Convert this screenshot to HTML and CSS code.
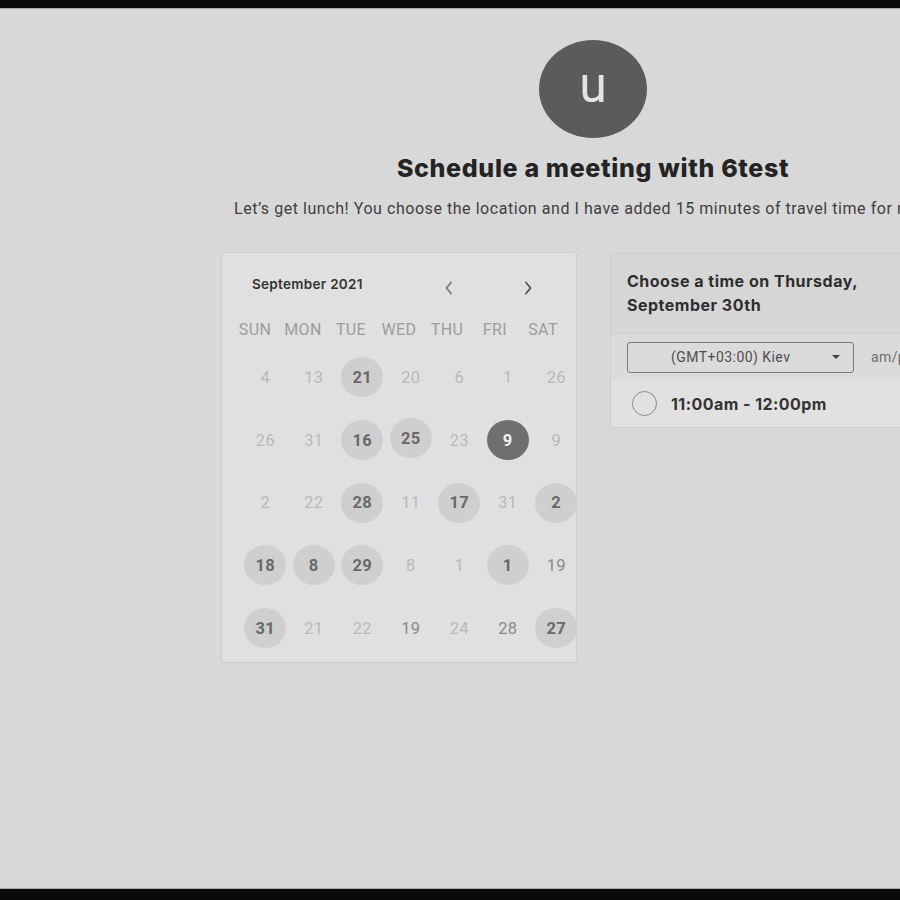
FILE: index.html
```html
<!DOCTYPE html>
<html lang="en">
<head>
<meta charset="utf-8">
<title>Schedule a meeting with 6test</title>
<link rel="stylesheet" href="styles.css">
</head>
<body>
<div class="frame">
  <div class="wrap">
    <header class="intro">
      <div class="avatar">u</div>
      <h1 class="title">Schedule a meeting with 6test</h1>
      <p class="subtitle">Let’s get lunch! You choose the location and I have added 15 minutes of travel time for me.</p>
    </header>
    <main class="cols">
      <section class="calendar">
        <div class="cal-head">
          <span class="month">September 2021</span>
          <button class="nav" aria-label="Previous month">
            <svg width="24" height="24" viewBox="0 0 24 24"><path d="M14 6.5 L9.5 12 L14 17.5" fill="none" stroke="#7a7a7a" stroke-width="1.8" stroke-linecap="round" stroke-linejoin="round"/></svg>
          </button>
          <button class="nav" aria-label="Next month">
            <svg width="24" height="24" viewBox="0 0 24 24"><path d="M10 6.5 L14.5 12 L10 17.5" fill="none" stroke="#555" stroke-width="1.8" stroke-linecap="round" stroke-linejoin="round"/></svg>
          </button>
        </div>
        <div class="weekdays">
          <span>SUN</span><span>MON</span><span>TUE</span><span>WED</span><span>THU</span><span>FRI</span><span>SAT</span>
        </div>
        <div class="days">
          <span class="d off">4</span><span class="d off">13</span><span class="d av">21</span><span class="d off">20</span><span class="d off">6</span><span class="d off">1</span><span class="d off">26</span>
          <span class="d off">26</span><span class="d off">31</span><span class="d av">16</span><span class="d av up">25</span><span class="d off">23</span><span class="d sel">9</span><span class="d off">9</span>
          <span class="d off">2</span><span class="d off">22</span><span class="d av">28</span><span class="d off">11</span><span class="d av">17</span><span class="d off">31</span><span class="d av">2</span>
          <span class="d av">18</span><span class="d av">8</span><span class="d av">29</span><span class="d off">8</span><span class="d off">1</span><span class="d av">1</span><span class="d mid">19</span>
          <span class="d av">31</span><span class="d off">21</span><span class="d off">22</span><span class="d mid">19</span><span class="d off">24</span><span class="d mid">28</span><span class="d av">27</span>
        </div>
      </section>
      <section class="times">
        <div class="times-head">Choose a time on Thursday,<br>September 30th</div>
        <div class="tz-row">
          <div class="tz-select">
            <span class="tz-text">(GMT+03:00) Kiev</span>
            <span class="caret"></span>
          </div>
          <span class="ampm">am/pm</span>
        </div>
        <div class="slot">
          <span class="radio"></span>
          <span class="slot-text">11:00am - 12:00pm</span>
        </div>
      </section>
    </main>
  </div>
</div>
</body>
</html>
```
FILE: styles.css
```css
html, body {
  margin: 0;
  padding: 0;
  background: #0a0a0a;
  overflow: hidden;
}

.frame {
  box-sizing: border-box;
  width: 900px;
  height: 900px;
  border-top: 8px solid #0a0a0a;
  border-bottom: 11px solid #0a0a0a;
  background: #d8d8d8;
  box-shadow: inset 0 1px 0 #a8a8a8, inset 0 -1px 0 #a8a8a8;
  overflow: hidden;
  font-family: Roboto, "Liberation Sans", sans-serif;
}

.wrap {
  width: 744px;
  margin-left: 221px;
  padding-top: 32px;
}

.intro {
  display: flex;
  flex-direction: column;
  align-items: center;
}

.avatar {
  width: 108px;
  height: 98px;
  border-radius: 50%;
  background: #5b5b5b;
  color: #e4e4e4;
  font-family: Roboto, sans-serif;
  font-weight: 400;
  font-size: 50px;
  line-height: 90px;
  text-align: center;
}

.title {
  margin: 14px 0 0;
  font-family: Inter, "Liberation Sans", sans-serif;
  font-weight: 800;
  font-size: 25px;
  line-height: 32px;
  letter-spacing: 0.65px;
  color: #242424;
}

.subtitle {
  align-self: flex-start;
  margin: 15px 0 0 13px;
  white-space: nowrap;
  font-size: 16px;
  line-height: 20px;
  letter-spacing: 0.55px;
  color: #3e3e3e;
}

.cols {
  display: flex;
  align-items: flex-start;
  gap: 33px;
  margin-top: 33px;
}

/* calendar */
.calendar {
  box-sizing: border-box;
  width: 356px;
  height: 411px;
  flex: none;
  background: #e0e0e0;
  border: 1px solid #cdcdcd;
  border-radius: 3px;
  overflow: hidden;
  padding-top: 21px;
}

.cal-head {
  display: flex;
  align-items: center;
  height: 22px;
  padding: 0 36px 0 30px;
}

.month {
  flex: 1;
  font-family: Inter, "Liberation Sans", sans-serif;
  font-weight: 600;
  font-size: 13.5px;
  letter-spacing: 0.3px;
  color: #333;
  margin-top: -3px;
}

.nav {
  width: 24px;
  height: 24px;
  padding: 0;
  border: 0;
  background: none;
  display: flex;
  margin-top: 6px;
}

.nav + .nav {
  margin-left: 55px;
}

.weekdays {
  display: grid;
  grid-template-columns: repeat(7, 48px);
  margin-top: 23px;
  padding-left: 9px;
  height: 20px;
  align-items: center;
}

.weekdays span {
  text-align: center;
  font-size: 16px;
  color: #9c9c9c;
  letter-spacing: 0.4px;
}

.days {
  display: grid;
  grid-template-columns: repeat(7, 48.5px);
  grid-auto-rows: 62.7px;
  margin-top: 7px;
  padding-left: 19px;
  width: 400px;
}

.d {
  justify-self: center;
  align-self: center;
  width: 42px;
  height: 40px;
  border-radius: 50%;
  display: flex;
  align-items: center;
  justify-content: center;
  font-size: 16.5px;
  letter-spacing: 0.3px;
}

.off {
  color: #b9b9b9;
}

.mid {
  color: #8a8a8a;
}

.av {
  background: #cfcfcf;
  color: #696969;
  font-weight: 700;
}

.up {
  margin-top: -4px;
}

.sel {
  background: #6f6f6f;
  color: #f0f0f0;
  font-weight: 700;
}

/* times */
.times {
  box-sizing: border-box;
  width: 400px;
  flex: none;
  margin-top: 1px;
  background: #e0e0e0;
  border: 1px solid #cdcdcd;
  border-radius: 3px;
  overflow: hidden;
}

.times-head {
  background: #d6d6d6;
  padding: 15px 16px 16px;
  font-family: Inter, "Liberation Sans", sans-serif;
  font-weight: 700;
  font-size: 16px;
  line-height: 24px;
  letter-spacing: 0.5px;
  color: #2e2e2e;
  border-bottom: 1px solid #cfcfcf;
}

.tz-row {
  display: flex;
  align-items: center;
  height: 46px;
  padding-left: 16px;
  background: #dbdbdb;
}

.tz-select {
  box-sizing: border-box;
  width: 227px;
  height: 31px;
  display: flex;
  align-items: center;
  border: 1px solid #7a7a7a;
  border-radius: 3px;
  padding-left: 43px;
  padding-right: 13px;
}

.tz-text {
  flex: 1;
  font-size: 14px;
  letter-spacing: 0.45px;
  color: #4e4e4e;
}

.caret {
  width: 0;
  height: 0;
  border-left: 4px solid transparent;
  border-right: 4px solid transparent;
  border-top: 4px solid #444;
}

.ampm {
  margin-left: 17px;
  font-size: 14px;
  letter-spacing: 0.4px;
  color: #6e6e6e;
}

.slot {
  display: flex;
  align-items: center;
  height: 47px;
  padding-left: 21px;
  background: #e1e1e1;
}

.radio {
  box-sizing: border-box;
  width: 25px;
  height: 25px;
  border-radius: 50%;
  border: 1.5px solid #8a8a8a;
}

.slot-text {
  margin-left: 14px;
  font-family: Inter, "Liberation Sans", sans-serif;
  font-weight: 700;
  font-size: 16px;
  letter-spacing: 0.45px;
  color: #333;
}
```
